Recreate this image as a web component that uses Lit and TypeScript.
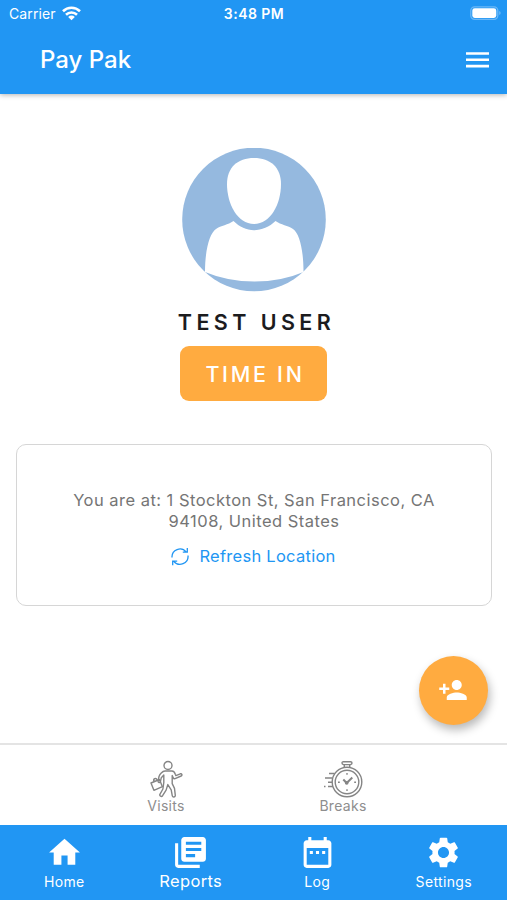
import { LitElement, html, css, svg } from "lit";
import { customElement } from "lit/decorators.js";
import { classMap } from "lit/directives/class-map.js";

const TABS = [
  { label: "Home", path: "M10 20v-6h4v6h5v-8h3L12 3 2 12h3v8z" },
  {
    label: "Reports",
    active: true,
    path: "M4 6H2v14c0 1.1.9 2 2 2h14v-2H4V6zm16-4H8c-1.1 0-2 .9-2 2v12c0 1.1.9 2 2 2h12c1.1 0 2-.9 2-2V4c0-1.1-.9-2-2-2zm-1 9H9V9h10v2zm-4 4H9v-2h6v2zm4-8H9V5h10v2z",
  },
  {
    label: "Log",
    path: "M9 11H7v2h2v-2zm4 0h-2v2h2v-2zm4 0h-2v2h2v-2zm2-7h-1V2h-2v2H8V2H6v2H5c-1.11 0-1.99.9-1.99 2L3 20c0 1.1.89 2 2 2h14c1.1 0 2-.9 2-2V6c0-1.1-.9-2-2-2zm0 16H5V9h14v11z",
  },
  {
    label: "Settings",
    path: "M19.14 12.94c.04-.3.06-.61.06-.94 0-.32-.02-.64-.07-.94l2.03-1.58c.18-.14.23-.41.12-.61l-1.92-3.32c-.12-.22-.37-.29-.59-.22l-2.39.96c-.5-.38-1.03-.7-1.62-.94l-.36-2.54c-.04-.24-.24-.41-.48-.41h-3.84c-.24 0-.43.17-.47.41l-.36 2.54c-.59.24-1.13.57-1.62.94l-2.39-.96c-.22-.08-.47 0-.59.22L2.74 8.87c-.12.21-.08.47.12.61l2.03 1.58c-.05.3-.09.63-.09.94s.02.64.07.94l-2.03 1.58c-.18.14-.23.41-.12.61l1.92 3.32c.12.22.37.29.59.22l2.39-.96c.5.38 1.03.7 1.62.94l.36 2.54c.05.24.24.41.48.41h3.84c.24 0 .44-.17.47-.41l.36-2.54c.59-.24 1.13-.56 1.62-.94l2.39.96c.22.08.47 0 .59-.22l1.92-3.32c.12-.22.07-.47-.12-.61l-2.01-1.58zM12 15.6c-1.98 0-3.6-1.62-3.6-3.6s1.62-3.6 3.6-3.6 3.6 1.62 3.6 3.6-1.62 3.6-3.6 3.6z",
  },
];

const walker = svg`
  <circle cx="18" cy="5.500" r="4"/>
  <path d="M15 11h7c2 0 2.800 1.500 3.300 3.300l.6 1.300 4.400-1.800c1.700-.4 2.200 1.500.8 2.200l-6 2.600c-1 .3-1.600-.1-2-1l-.9-2v8l2.300 4.800.8 7c.1 2.100-2.600 2.200-3 .4l-1.100-6-3.400-5.200-1.700 5.500-3.500 5.600c-1.200 1.500-3.300.3-2.700-1.400l3-5.300.9-6.500v-7.500l-2.500 2.700-.9 4c-.5 1.400-2.500 1-2.300-.5l.9-4.700c.7-2 3.300-5.500 6-5.500z"/>
  <path d="M1 23 9.500 19.500l2.900 7.200-8.500 3.600zM4 21.500c-1.200-2.800 2-4.200 3.300-1.400"/>`;

const stopwatch = svg`
  <circle cx="23" cy="22" r="14.800"/>
  <circle cx="23" cy="22" r="11.800"/>
  <path d="M19.500 1.800h7q1.500 0 1.500 1.300t-1.500 1.500h-7q-1.500-.1-1.500-1.500t1.500-1.300zM20.300 4.700v3M25.700 4.700v3"/>
  <path stroke-width="2" d="M19.300 19.500l3.400 3.500 5.600-5.500"/>
  <circle cx="22.700" cy="22.800" r="1.200"/>
  <path d="M23 13v1.800M23 29.200v1.800M14 22.300h1.800M30.200 22.300H32M5 13.500h5.500M1 18h7.500M4 22.300h4M0 26.500h1.500M4 26.500h5"/>`;

@customElement("app-root")
export class AppRoot extends LitElement {
  static styles = css`
    :host {
      display: flex;
      flex-direction: column;
      box-sizing: border-box;
      width: 100%;
      height: 900px;
      position: relative;
      overflow: hidden;
      background: #fff;
      font-family: Inter, "Liberation Sans", sans-serif;
      white-space: nowrap;
    }
    * { box-sizing: border-box; }
    svg { display: block; flex: none; }
    .header {
      height: 94px;
      flex: none;
      color: #fff;
      background: #2196f3;
      box-shadow: 0 1px 5px rgba(0, 0, 0, 0.3);
    }
    .status {
      display: grid;
      grid-template-columns: 1fr auto 1fr;
      align-items: center;
      height: 27px;
      padding: 0 6px 0 9px;
      font-size: 14px;
    }
    .carrier { display: flex; align-items: center; gap: 6px; letter-spacing: 0.1px; }
    .clock {
      margin-right: 2px;
      font-weight: 600;
      font-size: 14px;
      letter-spacing: 0.45px;
    }
    .battery { justify-self: end; }
    .bar {
      display: flex;
      align-items: center;
      justify-content: space-between;
      height: 65px;
      padding: 0 18px 0 40px;
    }
    .title { font-size: 24px; font-weight: 500; letter-spacing: 0; }
    .main {
      flex: 1;
      display: flex;
      flex-direction: column;
      align-items: center;
      padding: 54px 15px 0 16px;
    }
    .name {
      margin-top: 17px;
      line-height: 26px;
      font-size: 21.5px;
      font-weight: 600;
      letter-spacing: 4.4px;
      padding-left: 5px;
      color: #1c1c1e;
    }
    .time-in {
      margin-top: 11px;
      margin-right: 1px;
      width: 147px;
      height: 55px;
      border: 0;
      border-radius: 9px;
      background: #ffab40;
      color: #fff;
      font: 500 21.5px/57px Inter, sans-serif;
      letter-spacing: 2.7px;
      padding: 0 0 0 3px;
      text-align: center;
    }
    .card {
      margin-top: 43px;
      width: 100%;
      height: 162px;
      border: 1.5px solid #d6d6d6;
      border-radius: 10px;
      display: flex;
      flex-direction: column;
      align-items: center;
      padding-top: 45px;
    }
    .address {
      text-align: center;
      font-size: 16.5px;
      line-height: 21px;
      letter-spacing: 0.47px;
      color: #757575;
    }
    .refresh {
      display: flex;
      align-items: center;
      gap: 9px;
      margin: 14px 2px 0 0;
      height: 20px;
      font-size: 16.5px;
      letter-spacing: 0.27px;
      color: #2196f3;
    }
    .fab {
      position: absolute;
      right: 19.5px;
      top: 655.5px;
      width: 69px;
      height: 69px;
      border-radius: 50%;
      background: #ffab40;
      display: flex;
      align-items: center;
      justify-content: center;
      box-shadow: 2px 5px 10px rgba(0, 0, 0, 0.28);
    }
    .shortcuts {
      height: 82px;
      flex: none;
      border-top: 2px solid #e4e4e4;
      display: flex;
      justify-content: center;
      padding: 15px 0 0 2px;
    }
    .shortcut {
      width: 177px;
      display: flex;
      flex-direction: column;
      align-items: center;
      font-size: 14px;
      line-height: 16px;
      letter-spacing: 0.3px;
      color: #8e8e8e;
    }
    .shortcut svg { stroke: #858585; fill: none; stroke-width: 1.4; stroke-linejoin: round; }
    .tabs {
      height: 75px;
      flex: none;
      display: grid;
      grid-template-columns: repeat(4, 1fr);
      background: #2196f3;
      color: #fff;
      padding: 9px 0 0 1px;
    }
    .tab { display: flex; flex-direction: column; align-items: center; }
    .tab-label { margin-top: 2px; font-size: 14px; line-height: 18px; letter-spacing: 0.35px; }
    .active { margin-top: 1px; font-size: 16.5px; line-height: 18px; }
  `;

  render() {
    return html`
      <header class="header">
        <div class="status">
          <div class="carrier">
            <span>Carrier</span>
            <svg width="19" height="16" viewBox="0 0 19 16" fill="none" stroke="#fff" stroke-width="2.600">
              <path d="M1 5.200a12.200 12.200 0 0 1 17 0M4 8.700a7.900 7.900 0 0 1 11 0"/>
              <path d="M9.500 14.200 6.200 10.900a4.700 4.700 0 0 1 6.600 0z" fill="#fff" stroke="none"/>
            </svg>
          </div>
          <span class="clock">3:48 PM</span>
          <svg class="battery" width="31" height="15" viewBox="0 0 31 15">
            <rect x="0.800" y="0.800" width="27" height="12.600" rx="3.800" fill="none" stroke="#6bb8f7" stroke-width="1.300"/>
            <rect x="2.300" y="2.300" width="24" height="9.600" rx="2.400" fill="#fff"/>
            <path d="M29.200 5q1.500.6 1.500 2t-1.500 2z" fill="#6bb8f7"/>
          </svg>
        </div>
        <div class="bar">
          <span class="title">Pay Pak</span>
          <svg width="23" height="16" viewBox="0 0 23 16" fill="#fff">
            <path d="M0 0.200h23v2.600H0zM0 6.500h23v2.600H0zM0 12.800h23v2.600H0z"/>
          </svg>
        </div>
      </header>

      <main class="main">
        <svg width="144" height="144" viewBox="0 0 144 144">
          <circle cx="72" cy="71.500" r="71.800" fill="#95b9df"/>
          <path fill="#fff" d="M72 10c16.500 0 27 9.500 27 26 0 20-10.500 40-27 40s-27-20-27-40c0-16.500 10.500-26 27-26z"/>
          <path fill="#fff" d="M51.500 73c6 6 13 9.200 20.500 9.200S87.500 79 93.500 73c5.500 4 12.500 4.500 17.500 8 6.500 4.500 10.500 21 10.500 43q-22 9.500-49 9.500T23 124c0-22 4.500-38.500 11-43 5-3.500 12-4 17.500-8z"/>
        </svg>
        <div class="name">TEST USER</div>
        <button class="time-in">TIME IN</button>
        <section class="card">
          <div class="address">You are at: 1 Stockton St, San Francisco, CA<br />94108, United States</div>
          <div class="refresh">
            <svg width="20" height="20" viewBox="0 0 20 20" fill="none" stroke="#2196f3" stroke-width="1.300">
              <path d="M2 11.500A8 8 0 0 1 16.200 6M18 9.500A8 8 0 0 1 3.800 15.300M17.300 2v4.200h-4.500M2.700 19.300v-4.200h4.500"/>
            </svg>
            <span>Refresh Location</span>
          </div>
        </section>
      </main>

      <div class="fab">
        <svg width="30" height="30" viewBox="0 0 24 24" fill="#fff">
          <path d="M15 12c2.210 0 4-1.790 4-4s-1.790-4-4-4-4 1.790-4 4 1.790 4 4 4zm-9-2V7H4v3H1v2h3v3h2v-3h3v-2H6zm9 4c-2.670 0-8 1.340-8 4v2h16v-2c0-2.660-5.330-4-8-4z"/>
        </svg>
      </div>

      <div class="shortcuts">
        <div class="shortcut">
          <svg width="33" height="38" viewBox="0 0 33 38">${walker}</svg>
          <span>Visits</span>
        </div>
        <div class="shortcut">
          <svg width="39" height="38" viewBox="0 0 39 38">${stopwatch}</svg>
          <span>Breaks</span>
        </div>
      </div>

      <nav class="tabs">
        ${TABS.map(
          (t) => html`<div class="tab">
            <svg width="37" height="37" viewBox="0 0 24 24" fill="#fff"><path d=${t.path} /></svg>
            <span class=${classMap({ "tab-label": true, active: !!t.active })}>${t.label}</span>
          </div>`
        )}
      </nav>
    `;
  }
}
